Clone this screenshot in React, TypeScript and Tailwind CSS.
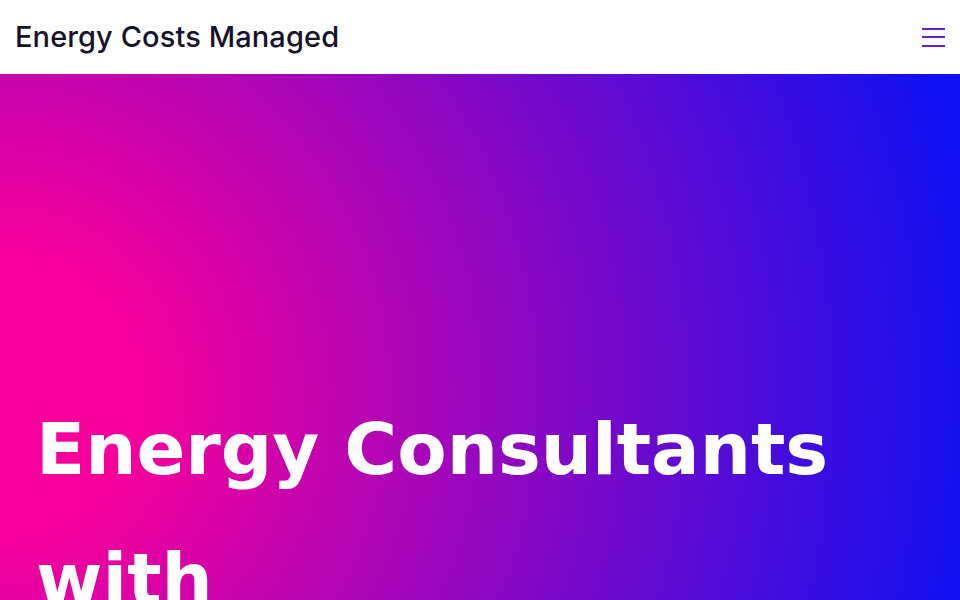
import React from 'react';

const App: React.FC = () => {
  return (
    <div className="min-h-screen bg-white">
      {/* Header */}
      <header className="h-[74px] flex items-center justify-between pl-[15px] pr-[15px] bg-white">
        <h2 className="text-[29px] font-medium text-[#16122b] tracking-[0.1px]" style={{ fontFamily: 'Inter, "Liberation Sans", sans-serif' }}>
          Energy Costs Managed
        </h2>
        <button aria-label="Menu" className="flex flex-col gap-[6.5px] w-[23px]">
          <span className="block h-[2px] w-full bg-[#6a1ec8]" />
          <span className="block h-[2px] w-full bg-[#6a1ec8]" />
          <span className="block h-[2px] w-full bg-[#6a1ec8]" />
        </button>
      </header>

      {/* Hero */}
      <section className="h-screen bg-[radial-gradient(ellipse_980px_1000px_at_0%_320px,#f7009b_14%,#1010f0_100%)] px-9 pt-[310px] overflow-hidden">
        <h1 className="text-[72px] leading-[130px] font-bold text-white" style={{ fontFamily: '"DejaVu Sans", sans-serif' }}>
          Energy Consultants with
        </h1>
      </section>
    </div>
  );
};

export default App;
